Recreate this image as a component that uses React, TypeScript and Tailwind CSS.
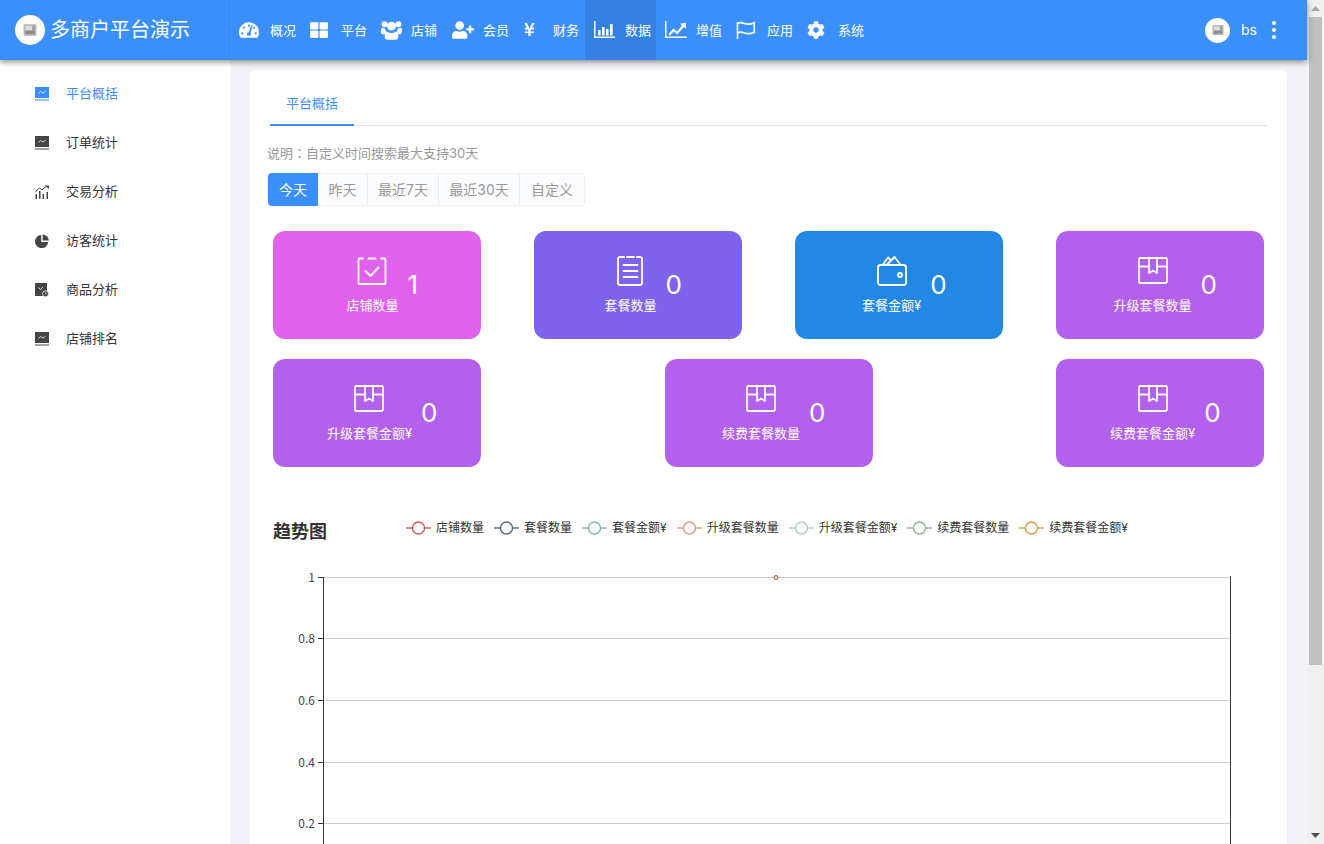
import React from "react";
import { FaTachometerAlt, FaThLarge, FaUserPlus, FaYenSign, FaCog } from "react-icons/fa";

const UsersIcon = () => (
  <svg width="21" height="20" viewBox="0 0 21 20" fill="white">
    <circle cx="3.600" cy="4.200" r="3" />
    <circle cx="17.400" cy="4.200" r="3" />
    <circle cx="10.500" cy="6.200" r="4.400" />
    <path d="M0 9.800c0-1.500 1-2 2-2 .6.600 1.400.9 2.400.9 0 1.500.5 3 1.400 4-.6.300-1.200.9-1.500 1.500H1.500C.6 14.200 0 13.700 0 12.800z" />
    <path d="M21 9.800c0-1.500-1-2-2-2-.6.600-1.400.9-2.400.9 0 1.500-.5 3-1.400 4 .6.300 1.200.9 1.500 1.500h2.300c.9 0 1.500-.5 1.500-1.400z" />
    <path d="M6.400 11.500c1 1 2.500 1.500 4.100 1.500s3.100-.5 4.100-1.500c1.500 0 2.700 1.200 2.700 3.200v2.300c0 1.500-1 2.800-2.700 2.800H6.400c-1.700 0-2.700-1.300-2.700-2.800v-2.300c0-2 1.200-3.200 2.700-3.200z" />
  </svg>
);
const BarIcon = () => (
  <svg width="21" height="18" viewBox="0 0 21 18" fill="white">
    <path d="M0 0h1.500v15.500H21V17H0z" />
    <rect x="4" y="9" width="2.600" height="5.500" />
    <rect x="8" y="6" width="2.600" height="8.500" />
    <rect x="12" y="8" width="2.600" height="6.500" />
    <rect x="16" y="3" width="2.600" height="11.500" />
  </svg>
);
const LineIcon = () => (
  <svg width="22" height="18" viewBox="0 0 22 18" fill="white">
    <path d="M0 0h1.500v15.500H22V17H0z" />
    <path d="M3.500 13l5-5.500 3.500 3 5-6-2-1.800 6-1v6l-2-1.800-6.800 7.600-3.500-3-3.800 4.300z" />
  </svg>
);
const FlagIcon = () => (
  <svg width="20" height="18" viewBox="0 0 20 18" fill="none" stroke="white" strokeWidth="1.600">
    <path d="M1.500 1v17" />
    <path d="M1.500 2.500c3-1.800 5-.8 8 .2s5 .8 8.800-1v9.500c-3.800 1.800-5.800 2-8.800 1s-5-2-8-.2" />
  </svg>
);

const navs = [
  { t: "概况", i: <FaTachometerAlt size={20} />, w: "w-[31px]" },
  { t: "平台", i: <FaThLarge size={18} />, w: "w-[31px]" },
  { t: "店铺", i: <UsersIcon />, w: "w-[30px]" },
  { t: "会员", i: <FaUserPlus size={22} />, w: "w-[31px]" },
  { t: "财务", i: <FaYenSign size={15} className="-ml-[1px]" />, w: "w-[30px]" },
  { t: "数据", i: <BarIcon />, w: "w-[31px]", active: true },
  { t: "增值", i: <LineIcon />, w: "w-[31px]" },
  { t: "应用", i: <FlagIcon />, w: "w-[31px]" },
  { t: "系统", i: <FaCog size={18} />, w: "w-[31px]" },
];

const Logo = ({ s }: { s: number }) => (
  <svg width={s} height={s} viewBox="0 0 12 12">
    <rect x="0.500" y="1" width="11" height="10" rx="1" fill="#b4b4b4" />
    <rect x="2" y="2.500" width="6" height="4" fill="#dedede" />
    <rect x="2" y="6.500" width="8" height="3" fill="#8c8c8c" />
    <rect x="8" y="2.500" width="2" height="4" fill="#9c9c9c" />
  </svg>
);

const Monitor = ({ c }: { c: string }) => (
  <svg width="14" height="14" viewBox="0 0 14 14">
    <rect x="0" y="0" width="14" height="11" fill={c} />
    <path d="M3.500 6.500l2-2 2.500 1.600 2.500-2" fill="none" stroke="white" strokeWidth="0.800" />
    <rect x="0" y="12.500" width="14" height="1" fill={c} />
  </svg>
);
const Trend = () => (
  <svg width="14" height="14" viewBox="0 0 14 14" fill="#444">
    <path d="M0.500 6.500l4-3.500 2.500 1.800 4-3.300" fill="none" stroke="#444" strokeWidth="1" />
    <path d="M9.500 0.500H14V4z" />
    <rect x="0.500" y="9" width="1.500" height="5" />
    <rect x="4" y="6" width="1.500" height="8" />
    <rect x="7.500" y="9" width="1.500" height="5" />
    <rect x="11.500" y="7" width="1.500" height="7" />
  </svg>
);
const Pie = () => (
  <svg width="14" height="14" viewBox="0 0 14 14" fill="#444">
    <path d="M6.200 1v7h7A6.600 6.600 0 1 1 6.200 1z" />
    <path d="M7.600 0.400A6.400 6.400 0 0 1 13.800 6.600H7.600z" />
  </svg>
);
const Goods = () => (
  <svg width="14" height="14" viewBox="0 0 14 14">
    <rect x="0" y="0" width="12" height="13" fill="#444" />
    <path d="M3.500 4.500l2 2 2.500-2.500" fill="none" stroke="white" strokeWidth="0.800" />
    <circle cx="10.500" cy="10.800" r="3" fill="#444" stroke="white" strokeWidth="0.700" />
    <path d="M10.500 9.300v1.600h1.300" fill="none" stroke="white" strokeWidth="0.600" />
  </svg>
);

const sides = [
  { t: "平台概括", i: <Monitor c="#3b8ffb" />, active: true },
  { t: "订单统计", i: <Monitor c="#444" /> },
  { t: "交易分析", i: <Trend /> },
  { t: "访客统计", i: <Pie /> },
  { t: "商品分析", i: <Goods /> },
  { t: "店铺排名", i: <Monitor c="#444" /> },
];

const CheckIcon = () => (
  <svg width="30" height="30" viewBox="0 0 30 30" fill="none" stroke="white" strokeWidth="1.800" strokeLinecap="round" strokeLinejoin="round">
    <path d="M6 2.500H2.500a1 1 0 0 0-1 1V27a1 1 0 0 0 1 1h25a1 1 0 0 0 1-1V3.500a1 1 0 0 0-1-1H24" />
    <path d="M11.500 2.500h7" />
    <path d="M8.500 15l5 5 8-8.500" strokeWidth="2" />
  </svg>
);
const ListIcon = () => (
  <svg width="30" height="30" viewBox="0 0 30 30" fill="none" stroke="white" strokeWidth="1.800" strokeLinecap="round" strokeLinejoin="round">
    <path d="M8 1H4a2 2 0 0 0-2 2v24a2 2 0 0 0 2 2h20a2 2 0 0 0 2-2V3a2 2 0 0 0-2-2h-3" />
    <path d="M11 1h7" strokeWidth="2" />
    <path d="M7.500 9h14M7.500 15h14M7.500 21h14" />
  </svg>
);
const WalletIcon = () => (
  <svg width="30" height="30" viewBox="0 0 30 30" fill="none" stroke="white" strokeWidth="1.800" strokeLinecap="round" strokeLinejoin="round">
    <rect x="1" y="9" width="28" height="20" rx="2.500" />
    <path d="M6 8.500L11 1.500l3 3M10 8.500L17.500 1l5.500 7" />
    <circle cx="23" cy="19" r="2" />
  </svg>
);
const BoxIcon = () => (
  <svg width="30" height="30" viewBox="0 0 30 30" fill="none" stroke="white" strokeWidth="1.800" strokeLinecap="round" strokeLinejoin="round">
    <rect x="1" y="2" width="28" height="25" rx="1.500" />
    <path d="M1 10.500h10M19 10.500h10" />
    <path d="M11 2v15l4-2.500 4 2.500V2" />
  </svg>
);

type CardT = { t: string; v: string; c: string; i: React.ReactNode };
const Card = ({ t, v, c, i }: CardT) => (
  <div className={`${c} w-[208.400px] h-[108px] rounded-[12px] flex items-center justify-center pl-[10px] text-white`}>
    <div className="flex flex-col items-center h-[60px] justify-between pt-[1px]">
      <div className="h-[30px]">{i}</div>
      <div className="text-[13px] leading-[18px] mb-[1px]">{t}</div>
    </div>
    <div className="ml-[9px] text-[26px] leading-[30px]">{v}</div>
  </div>
);

const legend = [
  { t: "店铺数量", c: "#c23531" },
  { t: "套餐数量", c: "#2f4554" },
  { t: "套餐金额¥", c: "#61a0a8" },
  { t: "升级套餐数量", c: "#d48265" },
  { t: "升级套餐金额¥", c: "#91c7ae" },
  { t: "续费套餐数量", c: "#749f83" },
  { t: "续费套餐金额¥", c: "#ca8622" },
];

const ys: [number, string][] = [
  [7.500, "1"],
  [68.500, "0.8"],
  [130.500, "0.6"],
  [192.500, "0.4"],
  [253.500, "0.2"],
];

const Chart = () => (
  <svg width="992" height="300" viewBox="0 0 992 300" className="block mt-[25px]" fontFamily="'Noto Sans CJK SC', sans-serif">
    {ys.map(([y, l]) => (
      <g key={l}>
        <line x1="50" x2="957" y1={y} y2={y} stroke="#ccc" />
        <line x1="45" x2="50" y1={y} y2={y} stroke="#333" />
        <text x="42" y={y + 4} textAnchor="end" fontSize="12" fill="#444">{l}</text>
      </g>
    ))}
    <line x1="50.500" x2="50.500" y1="7" y2="300" stroke="#333" />
    <line x1="957.500" x2="957.500" y1="6" y2="300" stroke="#333" />
    <circle cx="503" cy="7.500" r="2" fill="white" stroke="#c23531" strokeWidth="1" />
  </svg>
);

export default function App() {
  return (
    <div className="flex h-[844px] w-[1324px] overflow-hidden font-['Inter','Noto_Sans_CJK_SC',sans-serif] text-[#333]">
      <div className="flex flex-col w-[1307px] shrink-0">
        <header className="relative z-10 h-[60px] shrink-0 flex items-center bg-[#3b8ffb] text-white shadow-[0_2px_6px_rgba(0,0,0,0.45)]">
          <div className="w-[230px] flex items-center pl-[15px] border-r border-[#3a87ee] h-full">
            <div className="w-[30px] h-[30px] rounded-full bg-white flex items-center justify-center"><Logo s={14} /></div>
            <span className="ml-[5px] text-[20px] leading-[28px]">多商户平台演示</span>
          </div>
          <nav className="flex h-full">
            {navs.map((n) => (
              <div key={n.t} className={`w-[71px] h-full flex items-center pl-[9px] ${n.active ? "bg-[#3580e0]" : ""}`}>
                <div className={`${n.w} flex items-center -mt-[1px]`}>{n.i}</div>
                <span className="text-[13px] leading-[18px]">{n.t}</span>
              </div>
            ))}
          </nav>
          <div className="ml-auto flex items-center pr-[31px]">
            <div className="w-[25px] h-[25px] rounded-full bg-white flex items-center justify-center"><Logo s={12} /></div>
            <span className="ml-[11px] text-[14px] leading-[18px]">bs</span>
            <div className="ml-[15px] flex flex-col gap-[3px]">
              <span className="w-[4px] h-[4px] rounded-full bg-white" />
              <span className="w-[4px] h-[4px] rounded-full bg-white" />
              <span className="w-[4px] h-[4px] rounded-full bg-white" />
            </div>
          </div>
        </header>
        <div className="flex flex-1 min-h-0">
          <aside className="w-[230px] shrink-0 bg-white pt-[9px]">
            {sides.map((s) => (
              <div key={s.t} className="h-[49px] flex items-center pl-[35px]">
                <div className="w-[31px] flex">{s.i}</div>
                <span className={`text-[13px] ${s.active ? "text-[#3b8ffb]" : "text-[#333]"}`}>{s.t}</span>
              </div>
            ))}
          </aside>
          <main className="flex-1 min-w-0 bg-[#f2f3f8] pt-[10px] px-[20px] overflow-hidden">
            <div className="bg-white rounded-t-[6px] h-[900px] pt-[13px]">
              <div className="mx-[20px] h-[43px] border-b border-[#e3e3e3] flex">
                <div className="h-[43px] px-[16px] flex items-center text-[13px] text-[#3b8ffb] border-b-2 border-[#3b8ffb]">平台概括</div>
              </div>
              <div className="mt-[18px] ml-[17px] text-[13px] leading-[18px] text-[#999]">
                说明<span className="font-['Noto_Sans_CJK_TC',sans-serif]">：</span>自定义时间搜索最大支持30天
              </div>
              <div className="mt-[11px] ml-[18px] w-[317px] flex h-[33px] rounded-[4px] bg-[#fbfcfe] text-[14px] text-[#999] overflow-hidden">
                <div className="w-[50px] bg-[#3b8ffb] text-white flex items-center justify-center">今天</div>
                <div className="w-[50px] border-y border-r border-[#ebedf0] flex items-center justify-center">昨天</div>
                <div className="w-[71px] border-y border-r border-[#ebedf0] flex items-center justify-center">最近7天</div>
                <div className="w-[81px] border-y border-r border-[#ebedf0] flex items-center justify-center">最近30天</div>
                <div className="w-[65px] border-y border-r border-[#ebedf0] rounded-r-[4px] flex items-center justify-center">自定义</div>
              </div>
              <div className="ml-[23px] w-[991.500px] mt-[25px] flex flex-col gap-[20px]">
                <div className="flex justify-between">
                  <Card t="店铺数量" v="1" c="bg-[#e062ec]" i={<CheckIcon />} />
                  <Card t="套餐数量" v="0" c="bg-[#7f63ec]" i={<ListIcon />} />
                  <Card t="套餐金额¥" v="0" c="bg-[#2388e4]" i={<WalletIcon />} />
                  <Card t="升级套餐数量" v="0" c="bg-[#b360ec]" i={<BoxIcon />} />
                </div>
                <div className="flex justify-between">
                  <Card t="升级套餐金额¥" v="0" c="bg-[#b360ec]" i={<BoxIcon />} />
                  <Card t="续费套餐数量" v="0" c="bg-[#b360ec]" i={<BoxIcon />} />
                  <Card t="续费套餐金额¥" v="0" c="bg-[#b360ec]" i={<BoxIcon />} />
                </div>
              </div>
              <div className="mx-[23px] mt-[52px] flex items-start">
                <h2 className="text-[18px] leading-[26px] font-bold text-[#333] w-[133px]">趋势图</h2>
                <div className="flex gap-[10px] h-[18px]">
                  {legend.map((l) => (
                    <div key={l.t} className="flex items-center">
                      <svg width="25" height="14" viewBox="0 0 25 14" fill="none" stroke={l.c} strokeOpacity="0.8" strokeWidth="1.400">
                        <path d="M0 7h25" />
                        <circle cx="12.500" cy="7" r="6" fill="white" />
                      </svg>
                      <span className="ml-[5px] text-[12px] leading-[18px] text-[#333]">{l.t}</span>
                    </div>
                  ))}
                </div>
              </div>
              <div className="mx-[23px]"><Chart /></div>
            </div>
          </main>
        </div>
      </div>
      <div className="w-[17px] shrink-0 bg-[#f1f1f1] relative flex flex-col">
        <div className="h-[17px] flex items-center justify-center">
          <svg width="9" height="5" viewBox="0 0 9 5"><path d="M4.500 0L9 5H0z" fill="#a3a3a3" /></svg>
        </div>
        <div className="mx-[2px] h-[648px] bg-[#c1c1c1]" />
        <div className="mt-auto h-[17px] flex items-center justify-center">
          <svg width="9" height="5" viewBox="0 0 9 5"><path d="M0 0h9L4.500 5z" fill="#505050" /></svg>
        </div>
      </div>
    </div>
  );
}
